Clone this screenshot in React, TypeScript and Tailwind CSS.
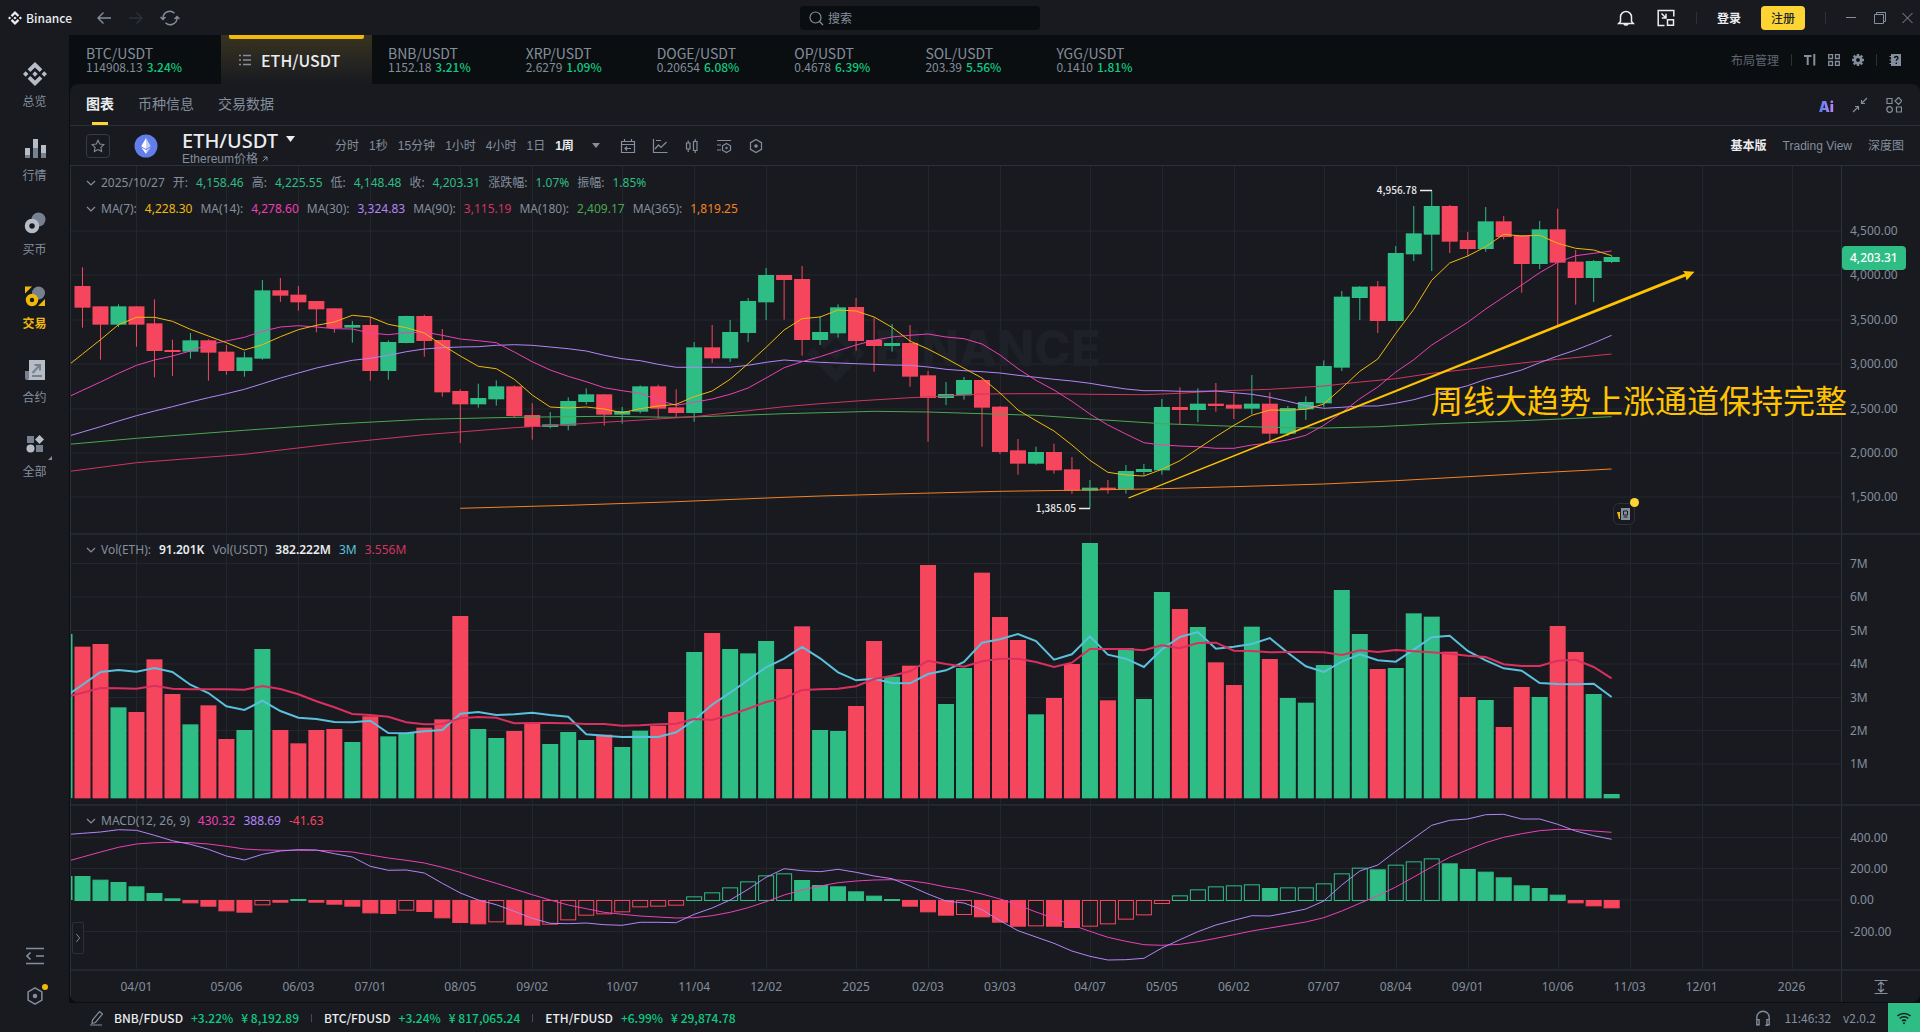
import { ReactNode } from "react";
import clsx from "clsx";

const GREEN = "#2ebd85";
const RED = "#f6465d";

// horizontal scale of all three panels, one candle a week
const STEP = 17.99;
const xAt = (i: number) => 11.5 + STEP * i;

const TICKERS = [
  { pair: "BTC/USDT", price: "114908.13", change: "3.24%" },
  { pair: "ETH/USDT", active: true },
  { pair: "BNB/USDT", price: "1152.18", change: "3.21%" },
  { pair: "XRP/USDT", price: "2.6279", change: "1.09%" },
  { pair: "DOGE/USDT", price: "0.20654", change: "6.08%" },
  { pair: "OP/USDT", price: "0.4678", change: "6.39%" },
  { pair: "SOL/USDT", price: "203.39", change: "5.56%" },
  { pair: "YGG/USDT", price: "0.1410", change: "1.81%" },
];

const INTERVALS = ["分时", "1秒", "15分钟", "1小时", "4小时", "1日", "1周"];

const FOOTER = [
  { pair: "BNB/FDUSD", change: "+3.22%", price: "¥ 8,192.89" },
  { pair: "BTC/FDUSD", change: "+3.24%", price: "¥ 817,065.24" },
  { pair: "ETH/FDUSD", change: "+6.99%", price: "¥ 29,874.78" },
];

const DATES: [number, string][] = [
  [3, "04/01"], [8, "05/06"], [12, "06/03"], [16, "07/01"], [21, "08/05"], [25, "09/02"],
  [30, "10/07"], [34, "11/04"], [38, "12/02"], [43, "2025"], [47, "02/03"], [51, "03/03"],
  [56, "04/07"], [60, "05/05"], [64, "06/02"], [69, "07/07"], [73, "08/04"], [77, "09/01"],
  [82, "10/06"], [86, "11/03"], [90, "12/01"], [95, "2026"],
];

// g = up week, r = down week
const TREND = [
  "rrgrrrgrrg", "grrrrgrggr", "rrggrrgggr", "ggrrgrgggr", "rggrrgrrgg",
  "rrrgrrgrgg", "grgrrgrggg", "ggrgggrrgr", "rgrrgg",
].join("");

// [high, body top, body bottom, low], three units to a pixel
const CANDLES = [
  [262, 318, 383, 443], [379, 379, 434, 539], [373, 379, 434, 441], [379, 379, 434, 500],
  [358, 430, 513, 592], [479, 510, 516, 588], [459, 481, 515, 536], [478, 481, 518, 602],
  [495, 515, 573, 584], [515, 532, 573, 590], [300, 331, 536, 539], [294, 331, 347, 366],
  [318, 344, 367, 392], [363, 363, 388, 457], [384, 385, 444, 458], [423, 435, 443, 488],
  [411, 435, 573, 602], [481, 486, 573, 599], [407, 408, 489, 490], [404, 408, 483, 530],
  [447, 480, 637, 650], [628, 633, 673, 789], [611, 654, 673, 683], [601, 619, 658, 677],
  [616, 619, 708, 714], [670, 705, 741, 779], [696, 733, 741, 745], [652, 663, 737, 751],
  [625, 643, 666, 674], [643, 643, 704, 737], [681, 693, 704, 731], [616, 619, 695, 700],
  [614, 619, 686, 716], [628, 682, 699, 712], [486, 502, 699, 725], [435, 502, 535, 549],
  [420, 456, 535, 546], [354, 363, 459, 486], [264, 285, 367, 420], [285, 285, 300, 419],
  [258, 297, 480, 527], [409, 456, 480, 495], [373, 382, 460, 473], [354, 381, 483, 512],
  [412, 480, 498, 575], [432, 489, 498, 515], [435, 489, 590, 620], [573, 586, 654, 785],
  [606, 642, 654, 675], [591, 600, 646, 659], [597, 600, 683, 800], [678, 680, 816, 822],
  [777, 811, 851, 884], [800, 816, 851, 854], [791, 816, 871, 881], [831, 868, 932, 941],
  [900, 923, 932, 985], [900, 923, 929, 941], [855, 873, 929, 941], [852, 867, 876, 887],
  [657, 681, 871, 884], [622, 681, 690, 733], [625, 671, 690, 726], [609, 671, 678, 695],
  [640, 674, 686, 717], [585, 671, 686, 703], [637, 671, 761, 790], [678, 684, 761, 768],
  [649, 666, 688, 720], [541, 558, 670, 682], [333, 350, 563, 573], [318, 320, 354, 420],
  [303, 319, 423, 459], [198, 219, 423, 423], [78, 160, 223, 243], [32, 78, 164, 273],
  [75, 78, 185, 219], [156, 180, 207, 229], [81, 124, 207, 215], [108, 124, 171, 178],
  [166, 166, 252, 338], [123, 148, 252, 267], [86, 148, 248, 438], [210, 245, 294, 374],
  [240, 243, 294, 366], [227, 231, 246, 249],
];

const MA7 = [
  522, 479, 434, 412, 412, 424, 448, 468, 488, 510, 494, 470, 449, 436, 426, 406, 411, 433, 443, 459,
  495, 528, 559, 566, 598, 645, 681, 684, 681, 687, 698, 686, 678, 673, 650, 633, 598, 551, 502, 450,
  416, 411, 390, 393, 411, 442, 483, 507, 535, 565, 594, 639, 690, 722, 753, 795, 841, 877, 885, 888,
  868, 842, 806, 770, 736, 706, 690, 691, 688, 672, 624, 574, 537, 460, 388, 301, 249, 228, 200, 163,
  168, 166, 190, 205, 210, 227,
];

const MA14 = [
  631, 606, 580, 556, 540, 528, 513, 494, 483, 472, 454, 441, 437, 441, 446, 447, 459, 464, 458, 456,
  466, 477, 482, 488, 516, 545, 570, 589, 605, 623, 632, 640, 660, 676, 667, 657, 643, 624, 594, 563,
  545, 530, 512, 495, 481, 471, 466, 462, 471, 476, 492, 525, 566, 601, 630, 664, 702, 735, 762, 788,
  795, 798, 800, 805, 805, 795, 789, 780, 766, 736, 698, 656, 621, 576, 539, 495, 461, 427, 387, 351,
  315, 278, 247, 227, 220, 213,
];

const MA30 = [
  756, 740, 723, 707, 693, 680, 666, 653, 641, 628, 611, 594, 579, 564, 552, 541, 535, 526, 515, 507,
  503, 501, 500, 496, 494, 496, 501, 506, 513, 526, 536, 542, 553, 562, 562, 562, 562, 556, 547, 540,
  544, 547, 549, 551, 553, 555, 556, 561, 568, 572, 575, 579, 586, 592, 598, 603, 610, 619, 627, 632,
  632, 634, 634, 633, 638, 643, 652, 664, 677, 685, 682, 678, 678, 670, 659, 644, 631, 617, 598, 585,
  570, 548, 528, 510, 489, 466,
];

type Point = [number, number];

const MA90: Point[] = [
  [-1, 876], [3, 848], [9, 823], [14, 791], [19, 764], [24, 743], [29, 727], [34, 710], [37, 692],
  [39, 680], [41, 671], [43, 663], [46, 653], [48, 648], [50, 642], [52, 641], [54, 641], [56, 643],
  [59, 644], [61, 640], [63, 633], [66, 628], [69, 618], [71, 606], [73, 596], [75, 580], [77, 568],
  [80, 549], [82, 538], [85, 522],
];

const MA180: Point[] = [
  [-1, 794], [3, 775], [9, 751], [14, 732], [19, 718], [24, 712], [29, 709], [33, 712], [35, 709],
  [39, 701], [44, 694], [47, 696], [50, 701], [53, 706], [56, 717], [60, 731], [64, 739], [67, 743],
  [69, 744], [72, 740], [75, 732], [80, 722], [85, 710],
];

const MA365: Point[] = [
  [21, 985], [27, 976], [33, 965], [39, 952], [41, 948], [45, 942], [51, 934], [55, 931], [60, 926],
  [64, 920], [69, 912], [73, 902], [77, 890], [81, 878], [85, 867],
];

const VOLUME = [
  350, 342, 532, 546, 388, 492, 583, 526, 627, 600, 357, 600, 640, 600, 597, 636, 559, 619, 609, 593,
  568, 258, 597, 624, 603, 579, 642, 606, 630, 614, 651, 602, 587, 546, 366, 309, 357, 370, 333, 417,
  289, 600, 603, 528, 333, 440, 407, 105, 522, 414, 128, 261, 330, 553, 504, 402, 39, 511, 354, 507,
  186, 237, 291, 397, 465, 290, 387, 504, 518, 405, 180, 312, 417, 414, 250, 260, 365, 501, 510, 591,
  471, 501, 288, 366, 492, 792,
];

const VOL_FAST = [
  464, 426, 420, 425, 414, 426, 464, 489, 529, 540, 512, 543, 563, 567, 576, 577, 572, 609, 610, 604,
  600, 551, 546, 555, 553, 548, 555, 560, 613, 617, 621, 620, 621, 607, 570, 524, 488, 450, 412, 386,
  351, 385, 427, 451, 446, 459, 460, 432, 421, 396, 338, 328, 312, 333, 389, 373, 319, 374, 386, 411,
  358, 321, 306, 356, 350, 342, 324, 368, 409, 426, 395, 373, 391, 395, 359, 322, 317, 363, 391, 415,
  422, 459, 462, 463, 461, 501,
];

const VOL_SLOW = [
  488, 474, 475, 476, 467, 476, 478, 478, 478, 479, 468, 477, 493, 514, 532, 552, 555, 560, 577, 583,
  582, 565, 561, 563, 580, 579, 579, 580, 582, 582, 587, 586, 583, 581, 567, 570, 554, 536, 516, 504,
  480, 478, 476, 469, 447, 437, 424, 392, 402, 410, 394, 386, 386, 396, 411, 398, 357, 357, 357, 361,
  346, 355, 339, 338, 362, 363, 367, 366, 366, 367, 375, 361, 366, 360, 364, 367, 371, 377, 381, 403,
  408, 408, 392, 389, 411, 445,
];

// bar ends, the zero line is at 300
const MACD = [
  228, 239, 246, 259, 279, 295, 307, 317, 331, 335, 313, 305, 297, 305, 311, 317, 337, 339, 329, 333,
  352, 366, 370, 364, 371, 374, 371, 358, 344, 340, 334, 319, 317, 314, 289, 277, 262, 244, 226, 220,
  240, 255, 259, 274, 287, 297, 317, 334, 344, 342, 349, 365, 377, 376, 377, 381, 377, 370, 356, 343,
  309, 286, 268, 259, 256, 253, 264, 262, 262, 250, 220, 203, 208, 194, 184, 175, 190, 207, 215, 232,
  256, 264, 284, 307, 316, 322,
];

const HOLLOW = new Set([
  10, 18, 23, 26, 27, 28, 29, 30, 31, 32, 33, 34, 35, 36, 37, 38, 39, 49, 53, 56, 57, 58, 59, 60, 61,
  62, 63, 64, 65, 67, 68, 69, 70, 71, 73, 74, 75,
]);

const DIF = [
  100, 96, 89, 91, 106, 122, 133, 148, 168, 180, 163, 153, 149, 150, 161, 171, 199, 211, 210, 219,
  250, 279, 300, 314, 334, 355, 370, 371, 369, 374, 376, 367, 367, 368, 343, 324, 300, 268, 232, 206,
  212, 215, 208, 217, 228, 236, 258, 282, 303, 309, 329, 362, 392, 411, 430, 453, 469, 480, 479, 475,
  444, 419, 395, 375, 361, 347, 348, 338, 327, 303, 255, 213, 195, 154, 115, 76, 61, 57, 44, 43,
  57, 57, 73, 93, 107, 118,
];

const DEA = [
  171, 156, 142, 132, 128, 127, 128, 132, 139, 147, 150, 151, 151, 151, 153, 156, 165, 174, 181, 189,
  202, 217, 234, 250, 267, 284, 300, 315, 326, 337, 343, 348, 351, 354, 353, 347, 337, 323, 305, 285,
  270, 258, 248, 243, 240, 239, 242, 250, 261, 269, 282, 297, 315, 336, 355, 375, 394, 412, 424, 434,
  436, 433, 425, 415, 404, 393, 384, 375, 366, 353, 333, 310, 287, 261, 231, 201, 172, 149, 128, 112,
  101, 92, 88, 89, 93, 97,
];

const BINANCE_PATH =
  "M16.624 13.92l2.718 2.716-7.353 7.353-7.353-7.353 2.717-2.716 4.636 4.66zM21.26 9.284L24 12l-2.715 2.716L18.568 12zM11.988 9.285l2.717 2.691-2.717 2.718L9.272 12zM2.716 9.284L5.41 12l-2.692 2.692L0 12zM11.988.012l7.353 7.329-2.717 2.715-4.636-4.635-4.635 4.66-2.718-2.716z";

function Icon({
  children,
  className = "w-4 h-4",
  box = 16,
}: {
  children: ReactNode;
  className?: string;
  box?: number;
}) {
  return (
    <svg
      viewBox={`0 0 ${box} ${box}`}
      className={clsx("shrink-0", className)}
      fill="none"
      stroke="currentColor"
      strokeWidth={1.2}
      aria-hidden
    >
      {children}
    </svg>
  );
}

function BinanceLogo({ className }: { className: string }) {
  return (
    <Icon box={24} className={className}>
      <path d={BINANCE_PATH} fill="currentColor" stroke="none" />
    </Icon>
  );
}

function Hexagon() {
  return (
    <>
      <path d="M8 1.5l5.5 3.2v6.6L8 14.5l-5.5-3.2V4.7z" />
      <circle cx="8" cy="8" r="1.8" fill="currentColor" stroke="none" />
    </>
  );
}

function Divider() {
  return <span className="w-px h-3 bg-[#2b3139] shrink-0" />;
}

function TitleBar() {
  return (
    <header className="flex items-center h-[35px] bg-[#181a20] text-[#848e9c]">
      <div className="flex items-center w-[calc(50%-160px)] pl-2 shrink-0">
        <BinanceLogo className="w-[14px] h-[14px] text-[#eaecef]" />
        <span className="ml-1 text-xs font-medium text-[#eaecef]">Binance</span>
        <div className="flex items-center gap-4 ml-6">
          <button aria-label="后退">
            <Icon>
              <path d="M15 8H2M7.5 2.5L2 8l5.5 5.5" strokeWidth="1.4" />
            </Icon>
          </button>
          <button aria-label="前进" className="text-[#2b3139]">
            <Icon>
              <path d="M1 8h13M8.5 2.5L14 8l-5.5 5.5" strokeWidth="1.4" />
            </Icon>
          </button>
          <button aria-label="刷新">
            <Icon box={20} className="w-5 h-5">
              <path
                d="M3 11V9.500a6.800 6.800 0 0 1 11.500-4.300M17 9v1.500A6.800 6.800 0 0 1 5.500 14.800M.5 9L3 11.500 5.500 9M14.500 11L17 8.500l2.500 2.500"
                strokeWidth="1.4"
              />
            </Icon>
          </button>
        </div>
      </div>

      <label className="flex items-center gap-1 w-60 h-6 px-2 rounded bg-[#0b0e11] shrink-0">
        <Icon>
          <circle cx="7.500" cy="7.500" r="5.500" />
          <path d="M11.500 11.500L15 15" />
        </Icon>
        <input
          placeholder="搜索"
          aria-label="搜索"
          className="w-full text-xs bg-transparent outline-none placeholder:text-[#848e9c]"
        />
      </label>

      <div className="flex items-center justify-end flex-1 gap-5 pr-[6px]">
        <button aria-label="通知" className="text-[#eaecef]">
          <Icon box={20} className="w-5 h-5">
            <path d="M4.500 13.500V9a5.500 5.500 0 0 1 11 0v4.500l1.800 2H2.700zM8 16c.5 1.400 3.500 1.400 4 0" strokeWidth="1.5" />
          </Icon>
        </button>
        <button aria-label="小窗" className="text-[#eaecef]">
          <Icon box={20} className="w-5 h-5">
            <path d="M8.500 17.500H2.200V2.500h15.600v6M11.500 11.800h6v5.400h-6zM5.500 5.500l4 4M10 5.800V10H5.800" strokeWidth="1.5" />
          </Icon>
        </button>
        <Divider />
        <button className="text-xs font-bold text-[#eaecef]">登录</button>
        <button className="w-11 h-6 text-xs font-medium rounded bg-[#fcd535] text-[#202630]">注册</button>
        <Divider />
        <div className="flex items-center gap-4">
          <button aria-label="最小化">
            <Icon box={12} className="w-3 h-3">
              <path d="M0 5.500h10" strokeWidth="1" />
            </Icon>
          </button>
          <button aria-label="还原">
            <Icon box={12} className="w-3 h-3">
              <path d="M.5 2.500h9v9h-9zM2.500 2.500v-2h9v9h-2" strokeWidth="1" />
            </Icon>
          </button>
          <button aria-label="关闭">
            <Icon box={12} className="w-3 h-3">
              <path d="M.5 1l10 10M10.500 1l-10 10" strokeWidth="1" />
            </Icon>
          </button>
        </div>
      </div>
    </header>
  );
}

function SideItem({ label, active, children }: { label: string; active?: boolean; children: ReactNode }) {
  return (
    <button className="flex flex-col items-center w-full gap-[7px]">
      {children}
      <span className={clsx("text-xs", active ? "font-bold text-[#f0b90b]" : "text-[#848e9c]")}>{label}</span>
    </button>
  );
}

function Sidebar() {
  return (
    <nav className="flex flex-col w-[69px] shrink-0 bg-[#181a20] pt-[27px] pb-[26px] gap-[27px] text-[#b7bdc6]">
      <SideItem label="总览">
        <BinanceLogo className="w-6 h-6" />
      </SideItem>
      <SideItem label="行情">
        <svg viewBox="0 0 24 24" className="w-6 h-6" aria-hidden>
          <path d="M2 12h5v8H2zM10 3h5v10h-5zM18 9h5v9h-5z" fill="#b7bdc6" />
          <path d="M2 19h5v3H2zM10 12h5v10h-5zM18 17h5v5h-5z" fill="#76808f" />
        </svg>
      </SideItem>
      <SideItem label="买币">
        <svg viewBox="0 0 24 24" className="w-6 h-6" aria-hidden>
          <circle cx="15.500" cy="9.500" r="7" fill="#76808f" />
          <circle cx="9" cy="16" r="5" fill="#181a20" stroke="#b7bdc6" strokeWidth="4.500" />
        </svg>
      </SideItem>
      <SideItem label="交易" active>
        <svg viewBox="0 0 24 24" className="w-6 h-6" aria-hidden>
          <circle cx="15.500" cy="9" r="6.500" fill="#76808f" />
          <circle cx="9" cy="16" r="4.200" fill="#181a20" stroke="#f0b90b" strokeWidth="4" />
          <path d="M2 2.500h7l-7 7zM22 22h-7l7-7z" fill="#f0b90b" />
        </svg>
      </SideItem>
      <SideItem label="合约">
        <svg viewBox="0 0 24 24" className="w-6 h-6" aria-hidden>
          <path d="M2 13h4v9H4a2 2 0 0 1-2-2z" fill="#76808f" />
          <path d="M6 2h16v20H4c1.200 0 2-.8 2-2z" fill="#b7bdc6" />
          <path d="M9.500 15L16 8M11.500 7H17v5.500M9 18h10" stroke="#76808f" strokeWidth="2" fill="none" />
        </svg>
      </SideItem>
      <div className="relative">
        <SideItem label="全部">
          <svg viewBox="0 0 24 24" className="w-6 h-6" aria-hidden>
            <path d="M4 4h7v7H4zM13 13h7v7h-7z" fill="#76808f" />
            <path d="M16.500 3l4.500 4.500-4.500 4.500L12 7.500z" fill="#b7bdc6" />
            <circle cx="7.500" cy="16.500" r="4" fill="#b7bdc6" />
          </svg>
        </SideItem>
        <svg viewBox="0 0 4 4" className="absolute left-12 top-6 w-1 h-1" aria-hidden>
          <path d="M4 0v4H0z" fill="#848e9c" />
        </svg>
      </div>
      <div className="flex flex-col items-center gap-5 mt-auto text-[#848e9c]">
        <button aria-label="收起">
          <Icon box={20} className="w-5 h-5">
            <path d="M1 2.500h18M1 17.500h18M11 10h8M5.500 6.500L2 10l3.500 3.500" strokeWidth="1.700" />
          </Icon>
        </button>
        <button aria-label="设置" className="relative">
          <Icon className="w-5 h-5">
            <Hexagon />
          </Icon>
          <span className="absolute -right-[3px] -top-[2px] w-[6px] h-[6px] rounded-full bg-[#f0b90b]" />
        </button>
      </div>
    </nav>
  );
}

function TickerTabs() {
  return (
    <div className="flex items-stretch h-[49px] text-[#848e9c]">
      {TICKERS.map((t) =>
        t.active ? (
          <button
            key={t.pair}
            className="relative flex items-center gap-[10px] px-[18px] w-[151px] bg-linear-to-b from-[#39331f] to-[#181a20]"
          >
            <span className="absolute left-2 right-2 top-0 h-1 rounded-b-xs bg-[#f0b90b]" />
            <Icon box={12} className="w-3 h-3">
              <path d="M0 1.500h2M4 1.500h8M0 6h2M4 6h8M0 10.500h2M4 10.500h8" strokeWidth="1.500" />
            </Icon>
            <span className="text-base font-medium text-[#eaecef]">{t.pair}</span>
          </button>
        ) : (
          <button key={t.pair} className="flex flex-col justify-center pl-4 pr-[39px] pb-[2px] text-left">
            <span className="text-sm leading-4">{t.pair}</span>
            <span className="flex gap-1 text-xs leading-3">
              {t.price}
              <span className="font-medium text-[#0ecb81]">{t.change}</span>
            </span>
          </button>
        ),
      )}
      <div className="flex items-center gap-3 ml-auto pr-[19px]">
        <button className="text-xs text-[#5e6673]">布局管理</button>
        <Divider />
        <button aria-label="文字">
          <Icon box={12} className="w-3 h-3">
            <path d="M0 2h7.500M3.700 2v9M10.300 0v11.500" strokeWidth="2" />
          </Icon>
        </button>
        <button aria-label="网格">
          <Icon box={12} className="w-3 h-3">
            <path
              d="M.7.7h3.800v3.800H.7zM7.500.7h3.800v3.800H7.500zM.7 7.500h3.800v3.800H.7zM7.500 7.500h3.800v3.800H7.500z"
              strokeWidth="1.300"
            />
          </Icon>
        </button>
        <button aria-label="设置">
          <Icon box={12} className="w-3 h-3">
            <circle cx="6" cy="6" r="3.200" strokeWidth="2.600" />
            <path
              d="M6 0v2M6 10v2M0 6h2M10 6h2M1.700 1.700l1.500 1.500M8.800 8.800l1.500 1.500M10.300 1.700L8.800 3.200M3.200 8.800l-1.500 1.500"
              strokeWidth="2.400"
            />
          </Icon>
        </button>
        <Divider />
        <button aria-label="帮助">
          <Icon box={12} className="w-3 h-3">
            <path d="M2 0h10v12H2z" fill="currentColor" stroke="none" />
            <path d="M.5 2.500h2.500M.5 6h2.500M.5 9.500h2.500" />
            <path
              d="M5.500 4c0-2 3.500-2 3.500 0 0 1.300-1.700 1.300-1.700 2.800M7.300 8.500V10"
              stroke="#0b0e11"
              strokeWidth="1.300"
            />
          </Icon>
        </button>
      </div>
    </div>
  );
}

function ViewTabs() {
  return (
    <div className="flex items-stretch h-[42px] pl-4 border-b border-[#2b3139] text-sm text-[#848e9c]">
      <div className="flex gap-6 *:pb-1">
        <button className="relative font-bold text-[#eaecef]">
          图表
          <span className="absolute left-[6px] bottom-0 w-4 h-[3px] bg-[#fcd535]" />
        </button>
        <button>币种信息</button>
        <button>交易数据</button>
      </div>
      <div className="flex items-center gap-[18px] ml-auto pr-[18px]">
        <button
          aria-label="AI"
          className="mt-1 font-['Inter',sans-serif] text-sm font-black text-transparent bg-clip-text bg-linear-to-r from-[#4f7df0] to-[#c184f5]"
        >
          Ai
        </button>
        <button aria-label="收缩">
          <Icon>
            <path d="M15 1L9.500 6.500M9.500 3v3.500H13M1 15l5.500-5.500M3 9.500h3.500V13" />
          </Icon>
        </button>
        <button aria-label="组件">
          <Icon>
            <path d="M1 1.500h5v5H1zM10.500 10h5v5h-5zM12.500.5L16 4l-3.500 3.500L9 4z" />
            <circle cx="3.600" cy="12.500" r="2.800" />
          </Icon>
        </button>
      </div>
    </div>
  );
}

function PairBar() {
  return (
    <div className="flex items-center h-10 px-4 border-b border-[#2b3139] text-xs text-[#848e9c] font-['Liberation_Sans','Noto_Sans_CJK_SC',sans-serif]">
      <button aria-label="收藏" className="flex items-center justify-center w-6 h-6 border border-[#333b47] rounded">
        <Icon className="w-[14px] h-[14px]">
          <path d="M8 1.500l2 4.300 4.700.6-3.400 3.200.9 4.700L8 12l-4.200 2.300.9-4.700L1.300 6.400 6 5.800z" />
        </Icon>
      </button>
      <svg viewBox="0 0 24 24" className="w-6 h-6 ml-6" aria-hidden>
        <circle cx="12" cy="12" r="11.500" fill="#627eea" />
        <path d="M12 4l-4.800 8.200L12 15z" fill="#fff" />
        <path d="M12 4l4.800 8.200L12 15z" fill="#c5cff8" />
        <path d="M7.200 13.300L12 20v-4z" fill="#fff" />
        <path d="M16.800 13.300L12 20v-4z" fill="#c5cff8" />
      </svg>
      <div className="flex flex-col pt-[6px] ml-6">
        <button className="flex items-center gap-2 text-xl leading-5 font-medium text-[#eaecef] font-['Noto_Sans',sans-serif]">
          ETH/USDT
          <svg viewBox="0 0 9 6" className="w-[9px] h-[6px] -mt-1" aria-hidden>
            <path d="M0 0h9L4.500 6z" fill="currentColor" />
          </svg>
        </button>
        <a href="#price" className="flex items-center gap-1 leading-4">
          Ethereum价格
          <Icon box={6} className="w-[6px] h-[6px]">
            <path d="M.5 5.500l4.500-4.500M1.500 1H5v3.500" strokeWidth="1" />
          </Icon>
        </a>
      </div>

      <div className="flex items-center gap-[10px] ml-10">
        {INTERVALS.map((name) => (
          <button key={name} className={clsx(name === "1周" && "font-bold text-[#eaecef]")}>
            {name}
          </button>
        ))}
        <button aria-label="更多周期" className="ml-2">
          <svg viewBox="0 0 8 5" className="w-2 h-[5px]" aria-hidden>
            <path d="M0 0h8L4 5z" fill="currentColor" />
          </svg>
        </button>
      </div>
      <div className="flex items-center gap-4 ml-5">
        <button aria-label="日期">
          <Icon>
            <path d="M1.500 3.500h13v11h-13zM1.500 6.500h13M4.500 1v2.500M11.500 1v2.500M11 10.500H5M7 8.500l-2 2 2 2" />
          </Icon>
        </button>
        <button aria-label="指标">
          <Icon>
            <path d="M1.500 1v13.500h14M3 11l3.500-4 2.500 2.500L14.500 4M4 2.500h5" />
          </Icon>
        </button>
        <button aria-label="图表类型">
          <Icon>
            <path d="M2.500 5h3.500v6H2.500zM4.200 2.500V5M4.200 11v3M9.500 3.500H13v9H9.500zM11.200 1v2.500M11.200 12.500V15" />
          </Icon>
        </button>
        <button aria-label="显示设置">
          <Icon>
            <path d="M1 2.500h14M1 7h4M1 12h4M10.500 5.500l4 2.300v4.400l-4 2.300-4-2.300V7.800z" />
            <circle cx="10.500" cy="10" r="1.200" fill="currentColor" stroke="none" />
          </Icon>
        </button>
        <button aria-label="图表设置">
          <Icon>
            <Hexagon />
          </Icon>
        </button>
      </div>

      <div className="flex gap-4 ml-auto">
        <button className="font-bold text-[#eaecef]">基本版</button>
        <button>Trading View</button>
        <button>深度图</button>
      </div>
    </div>
  );
}

function Legend({ items }: { items: [string, string?][] }) {
  return (
    <div className="flex items-center gap-2">
      <Icon box={10} className="w-[10px] h-[10px] -mr-[3px]">
        <path d="M1 3l4 4 4-4" />
      </Icon>
      {items.map(([text, tone]) => (
        <span key={text} className={tone}>
          {text}
        </span>
      ))}
    </div>
  );
}

function Panel({
  height,
  grid,
  labels,
  svg,
  axis,
  children,
}: {
  height: string;
  grid: number[];
  labels: string[];
  svg: ReactNode;
  axis?: ReactNode;
  children?: ReactNode;
}) {
  return (
    <div className={clsx("relative flex border-b-2 border-[#23282f]", height)}>
      <svg className="flex-1 h-full min-w-0 overflow-hidden" aria-hidden>
        <g stroke="#22272e">
          {grid.map((y) => (
            <line key={y} x1="0" x2="100%" y1={y} y2={y} />
          ))}
          {DATES.map(([i]) => (
            <line key={i} x1={Math.round(xAt(i)) + 0.5} x2={Math.round(xAt(i)) + 0.5} y1="0" y2="100%" />
          ))}
        </g>
        {svg}
      </svg>
      <div className="relative w-[79px] shrink-0 border-l border-[#2b3139]">
        <svg className="w-full h-full text-xs" fill="#848e9c">
          {labels.map((text, i) => (
            <text key={text} x="8" y={grid[i] + 4}>
              {text}
            </text>
          ))}
        </svg>
        {axis}
      </div>
      {children}
    </div>
  );
}

function Line({
  data,
  top,
  color,
  width = 1,
}: {
  data: number[] | Point[];
  top: number;
  color: string;
  width?: number;
}) {
  const points = data.map((d, i) => (typeof d === "number" ? ([i, d] as Point) : d));
  // run on past the left edge of the plot
  if (points[0][0] === 0) points.unshift([-1, points[0][1] * 2 - points[1][1]]);
  return (
    <polyline
      points={points.map(([i, v]) => `${xAt(i).toFixed(1)},${(v / 3 + top).toFixed(1)}`).join(" ")}
      fill="none"
      stroke={color}
      strokeWidth={width}
    />
  );
}

function PricePlot() {
  return (
    <>
      <g fill="#1e2228">
        <path d={BINANCE_PATH} transform="translate(736 159) scale(2.4)" />
        <text x="804" y="200" className="font-['Inter',sans-serif] text-[49px] font-extrabold">
          BINANCE
        </text>
      </g>
      {CANDLES.map(([high, open, close, low], i) => {
        const color = TREND[i] === "g" ? GREEN : RED;
        return (
          <g key={i} fill={color}>
            <rect x={xAt(i) - 0.5} y={high / 3 + 14} width="1" height={(low - high) / 3} />
            <rect x={xAt(i) - 8} y={open / 3 + 14} width="16" height={(close - open) / 3} />
          </g>
        );
      })}
      <Line data={MA365} top={14} color="#f58220" />
      <Line data={MA180} top={14} color="#4aa751" />
      <Line data={MA90} top={14} color="#d0355f" />
      <Line data={MA30} top={14} color="#b385f8" />
      <Line data={MA14} top={14} color="#eb40b5" />
      <Line data={MA7} top={14} color="#f0b90b" />
      <path d="M1349 24.500h12M1008 342.500h11" stroke="#eaecef" strokeWidth="1.500" />
      <g fill="#eaecef" className="text-[10px] font-medium font-['Noto_Sans_CJK_SC',sans-serif]">
        <text x="1346" y="28" textAnchor="end">
          4,956.78
        </text>
        <text x="1005" y="346" textAnchor="end">
          1,385.05
        </text>
      </g>
      <path d="M1057.300 331.500L1614 107.500l-2-2.500 11.500.8-8 8.700-.8-4L1057.800 332.500z" fill="#ffc300" />
    </>
  );
}

function VolumePlot() {
  return (
    <>
      <rect x={xAt(-1) - 8} y={99} width="16" height={164} fill={GREEN} />
      {VOLUME.map((v, i) => (
        <rect
          key={i}
          x={xAt(i) - 8}
          y={v / 3 - 5}
          width="16"
          height={(805 - v) / 3}
          fill={TREND[i] === "g" ? GREEN : RED}
        />
      ))}
      <Line data={VOL_FAST} top={-5} color="#5bc0de" width={2} />
      <Line data={VOL_SLOW} top={-5} color="#d9305f" width={2} />
    </>
  );
}

function MacdPlot() {
  return (
    <>
      <rect x={xAt(-1) - 8} y={70} width="16" height={24} fill={GREEN} />
      {MACD.map((v, i) => {
        const color = v < 300 ? GREEN : RED;
        return (
          <rect
            key={i}
            x={xAt(i) - 7.5}
            y={Math.min(v, 300) / 3 - 5.5}
            width="15"
            height={Math.abs(v - 300) / 3}
            stroke={color}
            fill={HOLLOW.has(i) ? "none" : color}
          />
        );
      })}
      <Line data={DEA} top={-6} color="#eb40b5" />
      <Line data={DIF} top={-6} color="#b385f8" />
    </>
  );
}

const UP = "text-[#2ebd85]";

function Chart() {
  return (
    <div className="border-l border-[#2b3139] text-xs text-[#848e9c] font-['Noto_Sans','Noto_Sans_CJK_SC',sans-serif]">
      <Panel
        height="h-[369px]"
        grid={[65, 109, 154, 198, 243, 287, 331]}
        labels={["4,500.00", "4,000.00", "3,500.00", "3,000.00", "2,500.00", "2,000.00", "1,500.00"]}
        svg={<PricePlot />}
        axis={
          <span className="absolute left-0 top-20 flex items-center h-6 px-2 rounded bg-[#2ebd85] font-medium text-white">
            4,203.31
          </span>
        }
      >
        <div className="absolute left-[15px] top-1 *:h-[26px]">
          <Legend
            items={[
              ["2025/10/27"],
              ["开:"], ["4,158.46", UP],
              ["高:"], ["4,225.55", UP],
              ["低:"], ["4,148.48", UP],
              ["收:"], ["4,203.31", UP],
              ["涨跌幅:"], ["1.07%", UP],
              ["振幅:"], ["1.85%", UP],
            ]}
          />
          <Legend
            items={[
              ["MA(7):"], ["4,228.30", "text-[#f0b90b]"],
              ["MA(14):"], ["4,278.60", "text-[#eb40b5]"],
              ["MA(30):"], ["3,324.83", "text-[#b385f8]"],
              ["MA(90):"], ["3,115.19", "text-[#d0355f]"],
              ["MA(180):"], ["2,409.17", "text-[#4aa751]"],
              ["MA(365):"], ["1,819.25", "text-[#f58220]"],
            ]}
          />
        </div>
        <p className="absolute left-[1360px] top-[217px] text-[32px] leading-8 whitespace-nowrap text-[#ffc300] font-['Noto_Sans_CJK_SC',sans-serif]">
          周线大趋势上涨通道保持完整
        </p>
        <button
          aria-label="资讯"
          className="absolute left-[1542px] top-[337px] flex items-center justify-center w-[22px] h-[22px] rounded-md border border-[#2b3139] bg-[#181a20]"
        >
          <svg viewBox="0 0 14 14" className="w-[14px] h-[14px]" aria-hidden>
            <path d="M4 1h9v12H4z" fill="#848e9c" />
            <path d="M6.500 4h4v4h-4zM6.500 10h4" stroke="#181a20" fill="none" />
            <path d="M0 5h3v7H2z" fill="#f0b90b" />
          </svg>
          <span className="absolute -right-[5px] -top-[6px] w-[9px] h-[9px] rounded-full bg-[#fcd535]" />
        </button>
      </Panel>

      <Panel
        height="h-[271px]"
        grid={[28.5, 62, 95.5, 129, 162.5, 195.5, 229]}
        labels={["7M", "6M", "5M", "4M", "3M", "2M", "1M"]}
        svg={<VolumePlot />}
      >
        <div className="absolute left-[15px] top-[3px] *:h-6">
          <Legend
            items={[
              ["Vol(ETH):"], ["91.201K", "font-semibold text-[#eaecef]"],
              ["Vol(USDT)"], ["382.222M", "font-semibold text-[#eaecef]"],
              ["3M", "text-[#5bc0de]"],
              ["3.556M", "text-[#d0355f]"],
            ]}
          />
        </div>
      </Panel>

      <Panel
        height="h-[165px]"
        grid={[31.5, 62.5, 94, 125.5]}
        labels={["400.00", "200.00", "0.00", "-200.00"]}
        svg={<MacdPlot />}
      >
        <div className="absolute left-[15px] top-[3px] *:h-6">
          <Legend
            items={[
              ["MACD(12, 26, 9)"],
              ["430.32", "text-[#eb40b5]"],
              ["388.69", "text-[#b385f8]"],
              ["-41.63", "text-[#f6465d]"],
            ]}
          />
        </div>
        <button
          aria-label="展开工具"
          className="absolute left-px top-[116px] flex items-center justify-center w-3 h-8 rounded-xs border border-[#2b3139] bg-[#181a20]"
        >
          <Icon box={10} className="w-2 h-2">
            <path d="M3 0l4 5-4 5" />
          </Icon>
        </button>
      </Panel>

      <div className="flex h-[31px]">
        <svg className="flex-1 h-full" fill="#848e9c" textAnchor="middle">
          {DATES.map(([i, text]) => (
            <text key={i} x={xAt(i)} y="20">
              {text}
            </text>
          ))}
        </svg>
        <div className="flex items-center justify-center w-[79px] border-l border-[#2b3139]">
          <button aria-label="自动缩放">
            <Icon>
              <path d="M1.500 1.500h13M1.500 14.500h13M8 3.500v9M5 6l3-3 3 3M5 10l3 3 3-3" />
            </Icon>
          </button>
        </div>
      </div>
    </div>
  );
}

function StatusBar() {
  return (
    <footer className="flex items-center h-[30px] pl-5 border-t border-[#0b0e11] bg-[#181a20] text-xs text-[#848e9c]">
      <button aria-label="编辑">
        <Icon>
          <path d="M10.500 1.500l3 2.500-7 8.500-3.500 1 .5-3.500zM1 15h12" />
        </Icon>
      </button>
      <ul className="flex items-center gap-3 ml-[9px]">
        {FOOTER.map((item, i) => (
          <li key={item.pair} className="flex items-center gap-2 font-medium">
            {i > 0 && <span className="w-px h-2 mr-1 bg-[#474d57]" />}
            <span className="text-[#eaecef]">{item.pair}</span>
            <span className="text-[#0ecb81]">{item.change}</span>
            <span className="text-[#0ecb81]">{item.price}</span>
          </li>
        ))}
      </ul>
      <div className="flex items-center h-full gap-3 ml-auto">
        <button aria-label="客服">
          <Icon className="w-[18px] h-[18px]">
            <path d="M2.500 13V7.500a5.500 5.500 0 0 1 11 0V13M2.500 9.500h2v4.500h-2zM11.500 9.500h2v4.500h-2zM12.500 14.500H10" />
          </Icon>
        </button>
        <span>11:46:32</span>
        <span>v2.0.2</span>
        <span className="flex items-center justify-center w-8 h-full bg-[#2ebd85] text-[#181a20]">
          <Icon>
            <path
              d="M1.500 6a9.500 9.500 0 0 1 13 0M3.800 8.500a6.200 6.200 0 0 1 8.400 0M6 11a3 3 0 0 1 4 0"
              strokeWidth="1.500"
            />
            <circle cx="8" cy="13.300" r="1" fill="currentColor" stroke="none" />
          </Icon>
        </span>
      </div>
    </footer>
  );
}

export default function App() {
  return (
    <div className="flex flex-col min-h-screen bg-[#0b0e11] font-['Noto_Sans_CJK_SC',sans-serif] [&_button]:cursor-pointer">
      <TitleBar />
      <div className="flex flex-1">
        <Sidebar />
        <div className="flex flex-col flex-1 min-w-0">
          <div className="pl-px">
            <TickerTabs />
          </div>
          <main className="ml-px overflow-hidden rounded-lg bg-[#181a20]">
            <ViewTabs />
            <PairBar />
            <Chart />
          </main>
          <div className="mt-auto">
            <StatusBar />
          </div>
        </div>
      </div>
    </div>
  );
}
